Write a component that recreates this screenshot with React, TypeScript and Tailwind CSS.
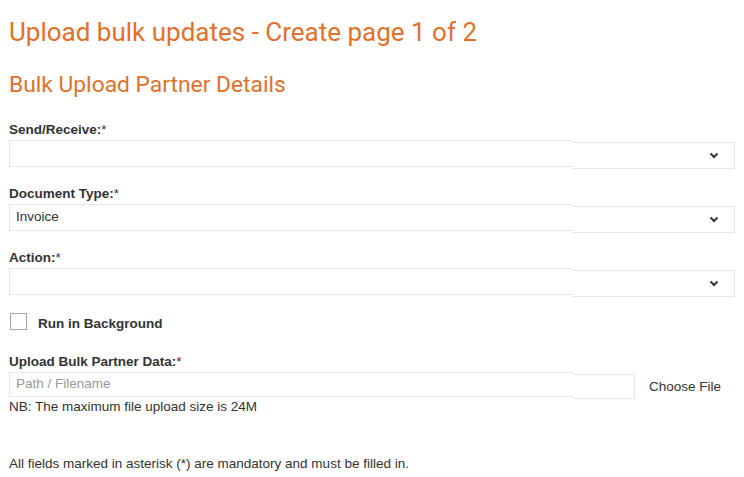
import React from "react";

function Chevron() {
  return (
    <svg width="10" height="7" viewBox="0 0 10 7" className="block">
      <path d="M1.5 1.5 L5 5 L8.5 1.5" fill="none" stroke="#333" strokeWidth="2" />
    </svg>
  );
}

function SplitSelect({ value }: { value?: string }) {
  return (
    <div className="flex items-start h-[29px]">
      <div className="w-[565px] h-[27px] border border-r-0 border-[#e6e6e6] flex items-center pl-[6px] text-[13.5px] text-[#333]">
        {value}
      </div>
      <div className="mt-[2px] w-[162px] h-[27px] border border-l-0 border-[#e6e6e6] flex items-center justify-end pr-[15px]">
        <Chevron />
      </div>
    </div>
  );
}

function Label({ children }: { children: React.ReactNode }) {
  return (
    <div className="text-[13.5px] font-bold text-[#333] leading-[15px] h-[15px]">
      {children}:<span className="font-normal">*</span>
    </div>
  );
}

export default function App() {
  return (
    <div
      className="w-[744px] h-[477px] bg-white px-[9px] overflow-hidden"
      style={{ fontFamily: '"Liberation Sans", Arial, sans-serif' }}
    >
      <h1
        className="text-[26px] text-[#e0712b] leading-[30px] h-[30px] mt-[17px]"
        style={{ fontFamily: "Roboto, sans-serif" }}
      >
        Upload bulk updates - Create page 1 of 2
      </h1>
      <h2
        className="text-[22.8px] text-[#e0712b] leading-[26px] h-[26px] mt-[25px]"
        style={{ fontFamily: "Roboto, sans-serif" }}
      >
        Bulk Upload Partner Details
      </h2>
      <div className="mt-[24px]">
        <Label>Send/Receive</Label>
        <div className="mt-[3px]">
          <SplitSelect />
        </div>
      </div>
      <div className="mt-[17px]">
        <Label>Document Type</Label>
        <div className="mt-[3px]">
          <SplitSelect value="Invoice" />
        </div>
      </div>
      <div className="mt-[17px]">
        <Label>Action</Label>
        <div className="mt-[3px]">
          <SplitSelect />
        </div>
      </div>
      <div className="mt-[16px] flex items-center gap-[11px] h-[17px]">
        <div className="ml-[1px] w-[17px] h-[17px] border border-[#a5a5a5] bg-white" />
        <span className="text-[13.5px] font-bold text-[#333] leading-[15px] pt-[3px]">Run in Background</span>
      </div>
      <div className="mt-[24px]">
        <Label>Upload Bulk Partner Data</Label>
        <div className="mt-[3px] flex items-start h-[27px]">
          <div className="w-[565px] h-[25px] border border-r-0 border-[#e6e6e6] flex items-center pl-[6px] text-[13.5px] text-[#999]">
            Path / Filename
          </div>
          <div className="mt-[2px] w-[61px] h-[25px] border border-l-0 border-[#e6e6e6]" />
          <div className="ml-[14px] mt-[2px] h-[27px] flex items-center text-[13.5px] text-[#333]">Choose File</div>
        </div>
        <div className="text-[13.5px] text-[#333] leading-[15px]">NB: The maximum file upload size is 24M</div>
      </div>
      <div className="text-[13.5px] text-[#333] mt-[42px] leading-[15px]">
        All fields marked in asterisk (*) are mandatory and must be filled in.
      </div>
    </div>
  );
}
